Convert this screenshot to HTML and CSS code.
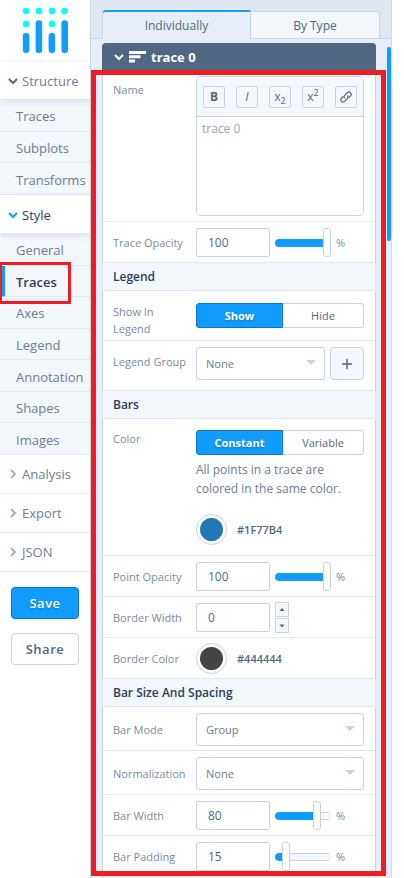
FILE: index.html
```html
<!DOCTYPE html>
<html lang="en">
<head>
<meta charset="utf-8">
<meta name="viewport" content="width=device-width, initial-scale=1">
<title>Chart editor</title>
<link rel="stylesheet" href="styles.css">
</head>
<body>
<div class="app">
  <nav class="sidebar">
    <a class="logo" href="#" aria-label="Home">
      <svg width="48" height="48" viewBox="0 0 48 48" aria-hidden="true">
        <g fill="#0ff"><circle cx="4" cy="4" r="3.3"/><circle cx="17" cy="4" r="3.3"/><circle cx="30" cy="4" r="3.3"/><circle cx="42.5" cy="4" r="3.3"/><circle cx="4" cy="17" r="3.3"/><circle cx="30" cy="17" r="3.3"/></g>
        <g fill="#119dff"><rect x="0.8" y="26" width="6.6" height="20" rx="3"/><rect x="13.6" y="13.3" width="6.6" height="32.7" rx="3"/><rect x="26.6" y="26" width="6.6" height="20" rx="3"/><rect x="39.4" y="13.3" width="6.6" height="32.7" rx="3"/></g>
      </svg>
    </a>
    <button class="section open"><svg class="chev" viewBox="0 0 10 10"><path d="M1 3l4 4 4-4"/></svg>Structure</button>
    <ul class="items">
      <li><a href="#">Traces</a></li>
      <li><a href="#">Subplots</a></li>
      <li><a href="#">Transforms</a></li>
    </ul>
    <button class="section open current"><svg class="chev" viewBox="0 0 10 10"><path d="M1 3l4 4 4-4"/></svg>Style</button>
    <ul class="items items-long">
      <li><a href="#">General</a></li>
      <li class="marked"><a class="active" href="#">Traces</a></li>
      <li><a href="#">Axes</a></li>
      <li><a href="#">Legend</a></li>
      <li><a href="#">Annotation</a></li>
      <li><a href="#">Shapes</a></li>
      <li><a href="#">Images</a></li>
    </ul>
    <button class="section"><svg class="chev" viewBox="0 0 10 10"><path d="M3 1l4 4-4 4"/></svg>Analysis</button>
    <button class="section"><svg class="chev" viewBox="0 0 10 10"><path d="M3 1l4 4-4 4"/></svg>Export</button>
    <button class="section"><svg class="chev" viewBox="0 0 10 10"><path d="M3 1l4 4-4 4"/></svg>JSON</button>
    <div class="actions">
      <button class="btn primary">Save</button>
      <button class="btn">Share</button>
    </div>
  </nav>

  <main class="main">
    <div class="tabs">
      <button class="tab selected">Individually</button>
      <button class="tab">By Type</button>
    </div>
    <section class="panel">
      <button class="panel-head">
        <svg class="chev" viewBox="0 0 10 10"><path d="M1 3l4 4 4-4"/></svg>
        <svg class="bars" width="17" height="12" viewBox="0 0 17 12" aria-hidden="true"><path d="M0 0h17v3H0zM0 4.3h11.500v3H0zM0 8.600h6v3H0z"/></svg>
        trace 0
      </button>

      <div class="row row-name">
        <label for="name">Name</label>
        <div class="editor">
          <div class="toolbar">
            <button aria-label="Bold"><b>B</b></button>
            <button aria-label="Italic"><i>I</i></button>
            <button aria-label="Subscript"><span>x<sub>2</sub></span></button>
            <button aria-label="Superscript"><span>x<sup>2</sup></span></button>
            <button aria-label="Link"><svg width="12" height="12" viewBox="0 0 12 12"><path d="M4.800 7.500C3.600 6.500 3.900 5.300 4.700 4.400L7.200 1.700C8.200.7 9.600.7 10.500 1.600s.9 2.200 0 3.200L8.900 6.500M7.200 4.500C8.400 5.500 8.100 6.700 7.300 7.600L4.800 10.300C3.800 11.300 2.400 11.300 1.500 10.400s-.9-2.200 0-3.200L3.100 5.500"/></svg></button>
          </div>
          <textarea id="name" placeholder="trace 0"></textarea>
        </div>
      </div>

      <div class="row">
        <label for="opacity">Trace Opacity</label>
        <div class="numeric">
          <input class="num" id="opacity" type="text" value="100">
          <input class="slider" type="range" value="100" style="--v:100" aria-label="Trace Opacity">
          <span>%</span>
        </div>
      </div>

      <h2>Legend</h2>
      <div class="row row-wrap">
        <span class="label">Show In Legend</span>
        <div class="toggle"><button class="on">Show</button><button>Hide</button></div>
      </div>
      <div class="row row-group">
        <label for="group">Legend Group</label>
        <div class="with-add">
          <div class="select"><select id="group"><option>None</option></select></div>
          <button class="add" aria-label="Add group"><svg width="12" height="12" viewBox="0 0 12 12"><path d="M6 1v10M1 6h10"/></svg></button>
        </div>
      </div>

      <h2>Bars</h2>
      <div class="row row-color">
        <span class="label">Color</span>
        <div>
          <div class="toggle"><button class="on">Constant</button><button>Variable</button></div>
          <p>All points in a trace are colored in the same color.</p>
          <div class="color"><button class="swatch blue" aria-label="Color"></button><span>#1F77B4</span></div>
        </div>
      </div>
      <div class="row">
        <label for="popacity">Point Opacity</label>
        <div class="numeric">
          <input class="num" id="popacity" type="text" value="100">
          <input class="slider" type="range" value="100" style="--v:100" aria-label="Point Opacity">
          <span>%</span>
        </div>
      </div>
      <div class="row">
        <label for="bwidth">Border Width</label>
        <div class="numeric">
          <input class="num" id="bwidth" type="text" value="0">
          <div class="stepper">
            <button aria-label="Increase"><svg width="6" height="4" viewBox="0 0 6 4"><path d="M3 0l2.500 3h-5z"/></svg></button>
            <button aria-label="Decrease"><svg width="6" height="4" viewBox="0 0 6 4"><path d="M3 3.500L.5.5h5z"/></svg></button>
          </div>
        </div>
      </div>
      <div class="row">
        <span class="label">Border Color</span>
        <div class="color"><button class="swatch dark" aria-label="Border Color"></button><span>#444444</span></div>
      </div>

      <h2>Bar Size And Spacing</h2>
      <div class="row row-select">
        <label for="mode">Bar Mode</label>
        <div class="select"><select id="mode"><option>Group</option></select></div>
      </div>
      <div class="row row-select">
        <label for="norm">Normalization</label>
        <div class="select"><select id="norm"><option>None</option></select></div>
      </div>
      <div class="row">
        <label for="barwidth">Bar Width</label>
        <div class="numeric">
          <input class="num" id="barwidth" type="text" value="80">
          <input class="slider" type="range" value="80" style="--v:80" aria-label="Bar Width">
          <span>%</span>
        </div>
      </div>
      <div class="row">
        <label for="barpad">Bar Padding</label>
        <div class="numeric">
          <input class="num" id="barpad" type="text" value="15">
          <input class="slider" type="range" value="15" style="--v:15" aria-label="Bar Padding">
          <span>%</span>
        </div>
      </div>
    </section>
    <div class="scrollbar"></div>
    <div class="callout"></div>
  </main>
</div>
</body>
</html>
```
FILE: styles.css
```css
* { box-sizing: border-box; }

:root {
  --text: #506784;
  --muted: #7a8ba3;
  --dark: #2a3f5f;
  --line: #dfe8f3;
  --edge: #c8d4e3;
  --soft: #f3f6fa;
  --blue: #119dff;
  --red: #ef1c24;
}

body {
  margin: 0;
  background: #fff;
  color: var(--text);
  font-family: "Open Sans", sans-serif;
  font-size: 12px;
}

button, input, select, textarea { font: inherit; color: inherit; margin: 0; }
button { padding: 0; background: none; border: 0; }
a { color: inherit; text-decoration: none; }

.app {
  display: flex;
  height: 100vh;
  padding-right: 12px;
  overflow: hidden;
}

/* Sidebar */
.sidebar {
  flex: 0 0 91px;
  border-right: 1px solid var(--edge);
  color: #6b7c95;
  font-size: 13px;
}
.logo { display: block; height: 61px; padding: 7px 0 0 22px; }
.logo svg { display: block; }

.chev {
  width: 10px;
  height: 10px;
  fill: none;
  stroke: currentColor;
  stroke-width: 2;
}
.section {
  display: flex;
  align-items: center;
  gap: 4px;
  width: 100%;
  height: 39px;
  padding-left: 8px;
  border-bottom: 1px solid var(--line);
}
.section .chev { stroke: #a2b1c6; }
.section.open {
  position: relative;
  border-top: 1px solid #f6f8fb;
  box-shadow: 0 2px 5px #c8d4e399;
}
.section.open .chev { stroke: var(--text); }
.section.current { color: var(--dark); font-weight: 500; }
.section.current .chev { stroke: var(--blue); }

.items {
  display: flex;
  flex-direction: column;
  height: 95px;
  margin: 0;
  padding: 0;
  list-style: none;
  background: var(--soft);
}
.items-long { height: 221px; }
.items li { display: flex; flex: 1; }
.items a {
  display: flex;
  flex: 1;
  align-items: center;
  padding: 2px 0 0 16px;
  border-bottom: 1px solid var(--line);
}
.items a.active {
  padding-left: 11px;
  border-left: 5px solid var(--blue);
  color: var(--dark);
  font-weight: 600;
}
.marked { position: relative; }
.marked::after {
  content: "";
  position: absolute;
  inset: -4px 19px -7px 0;
  border: 3px solid var(--red);
  border-left-width: 2px;
}

.actions {
  display: flex;
  flex-direction: column;
  gap: 14px;
  padding: 15px 11px;
}
.btn {
  height: 32px;
  border: 1px solid var(--edge);
  border-radius: 4px;
  color: var(--text);
  font-weight: 600;
  letter-spacing: 0.5px;
}
.btn.primary {
  background: var(--blue);
  border-color: #0d76bf;
  color: #fff;
  text-shadow: 0 1px 2px #0d76bf;
}

/* Main column */
.main {
  position: relative;
  flex: 1;
  min-width: 0;
  background: #e8eef7;
  border-right: 1px solid #d3ddea;
}
.tabs {
  display: flex;
  align-items: flex-end;
  height: 39px;
  padding: 0 11px;
  background: #dfe7f2;
  box-shadow: inset 0 -1px var(--edge);
}
.tab {
  flex: 130;
  height: 28px;
  background: var(--soft);
  border: 1px solid var(--edge);
  border-left: 0;
  border-radius: 0 4px 0 0;
}
.tab.selected {
  flex: 149;
  height: 29px;
  background: #e8eef7;
  border-left: 1px solid var(--edge);
  border-right: 1px solid var(--edge);
  border-top: 2px solid var(--blue);
  border-bottom: 0;
  border-radius: 4px 0 0 0;
}

.panel {
  margin: 4px 15px 0 11px;
}
.panel-head {
  display: flex;
  align-items: center;
  width: 100%;
  height: 27px;
  padding-left: 12px;
  background: #506784;
  border-radius: 4px 4px 0 0;
  color: #fff;
  font-size: 13px;
  font-weight: 700;
}
.bars { margin: 0 5px; fill: #fff; }

.row {
  display: grid;
  grid-template-columns: 83px 1fr;
  align-items: center;
  min-height: 41px;
  padding: 5px 11px 5px 10px;
  background: #fff;
  border: 1px solid var(--edge);
  border-width: 0 1px;
  box-shadow: inset 0 -1px var(--line);
}
.row label, .row .label {
  color: var(--muted);
  font-size: 11px;
  line-height: 17px;
}
.row-name, .row-wrap, .row-group, .row-color { align-items: start; }
.row-name { padding-top: 6px; padding-bottom: 6px; }
.row-name label { padding-top: 5px; }
.row-wrap { padding-top: 12px; padding-bottom: 4px; }
.row-wrap .label { width: 60px; }
.row-group { padding-top: 6px; padding-bottom: 11px; }
.row-group label { padding-top: 6px; }
.row-color { padding-top: 11px; padding-bottom: 11px; }
.row-select { min-height: 44px; }

.panel h2 {
  height: 28px;
  margin: 0;
  padding-left: 10px;
  border: 1px solid var(--line);
  border-width: 0 1px 1px;
  background: var(--soft);
  color: var(--dark);
  font-size: 12px;
  font-weight: 600;
  line-height: 28px;
}

/* Rich text editor */
.editor {
  height: 140px;
  display: flex;
  flex-direction: column;
  overflow: hidden;
  border: 1px solid var(--edge);
  border-radius: 4px;
}
.toolbar {
  display: flex;
  align-items: center;
  justify-content: space-between;
  height: 40px;
  padding: 0 6px;
  background: var(--soft);
  border-bottom: 1px solid var(--edge);
}
.toolbar button {
  display: flex;
  align-items: center;
  justify-content: center;
  width: 22px;
  height: 22px;
  border: 1px solid var(--edge);
  border-radius: 2px;
  line-height: 18px;
}
.toolbar sub, .toolbar sup { font-size: 9px; line-height: 0; }
.toolbar svg { fill: none; stroke: var(--text); stroke-width: 1.2; }
.editor textarea {
  flex: 1;
  width: 100%;
  padding: 3px 5px;
  border: 0;
  resize: none;
  background: #fff;
}
.editor textarea::placeholder { color: #9aa3af; }

/* Numeric fields */
.numeric { display: flex; align-items: center; gap: 5px; }
.num {
  width: 74px;
  height: 29px;
  padding: 0 11px;
  border: 1px solid var(--edge);
  border-radius: 2px;
  background: #fff;
  font-size: 12px;
}
.numeric span { color: var(--muted); font-size: 11px; }
.slider {
  --stop: calc(4px + (100% - 8px) * var(--v) / 100);
  width: 56px;
  height: 29px;
  appearance: none;
  background: none;
}
.slider::-webkit-slider-runnable-track {
  height: 8px;
  border-radius: 4px;
  background:
    linear-gradient(to right, var(--blue) var(--stop), transparent var(--stop)),
    linear-gradient(var(--edge) 1px, var(--soft) 1px, var(--soft) 7px, var(--edge) 7px);
}
.slider::-webkit-slider-thumb {
  appearance: none;
  width: 8px;
  height: 29px;
  margin-top: -11px;
  border: 1px solid var(--edge);
  border-radius: 3px;
  background: #fff;
}
.stepper { display: flex; flex-direction: column; gap: 1px; }
.stepper button {
  display: flex;
  align-items: center;
  justify-content: center;
  width: 14px;
  height: 15px;
  border: 1px solid var(--edge);
  background: var(--soft);
}
.stepper svg { fill: var(--text); }

/* Toggle, select, colour */
.toggle {
  display: grid;
  grid-template-columns: 87px 1fr;
  height: 25px;
  font-size: 11px;
}
.toggle button { border: 1px solid var(--edge); border-left: 0; border-radius: 0 3px 3px 0; }
.toggle .on {
  border: 1px solid #0d76bf;
  border-radius: 3px 0 0 3px;
  background: var(--blue);
  color: #fff;
  font-weight: 700;
  text-shadow: 0 1px 2px #0d76bf;
}
.select { position: relative; }
.select select {
  display: block;
  width: 100%;
  height: 33px;
  padding: 0 9px;
  appearance: none;
  border: 1px solid var(--edge);
  border-radius: 3px;
  background: #fff;
  color: #6b7c95;
  font-size: 11px;
}
.select::after {
  content: "";
  position: absolute;
  top: 13px;
  right: 9px;
  border: 5px solid transparent;
  border-top-color: var(--edge);
  border-bottom: 0;
}
.with-add { display: grid; grid-template-columns: 1fr 34px; gap: 5px; }
.add {
  display: flex;
  align-items: center;
  justify-content: center;
  border: 1px solid var(--edge);
  border-radius: 4px;
  background: var(--soft);
}
.add svg { stroke: var(--text); stroke-width: 1.4; }
.row p {
  margin: 5px 0 16px;
  color: #6b7c95;
  font-size: 12px;
  line-height: 19px;
}
.color { display: flex; align-items: center; gap: 10px; font-weight: 600; font-size: 11px; }
.swatch {
  width: 31px;
  height: 31px;
  padding: 3px;
  border: 1px solid var(--edge);
  border-radius: 50%;
  background-clip: content-box;
}
.swatch.blue { background-color: #1f77b4; }
.swatch.dark { background-color: #444; }

/* Overlays */
.scrollbar {
  position: absolute;
  top: 47px;
  right: 0;
  width: 4px;
  height: 194px;
  border-radius: 2px;
  background: var(--blue);
}
.callout {
  position: absolute;
  inset: 70px 5px 2px 0;
  border: 5px solid var(--red);
  pointer-events: none;
}
```
